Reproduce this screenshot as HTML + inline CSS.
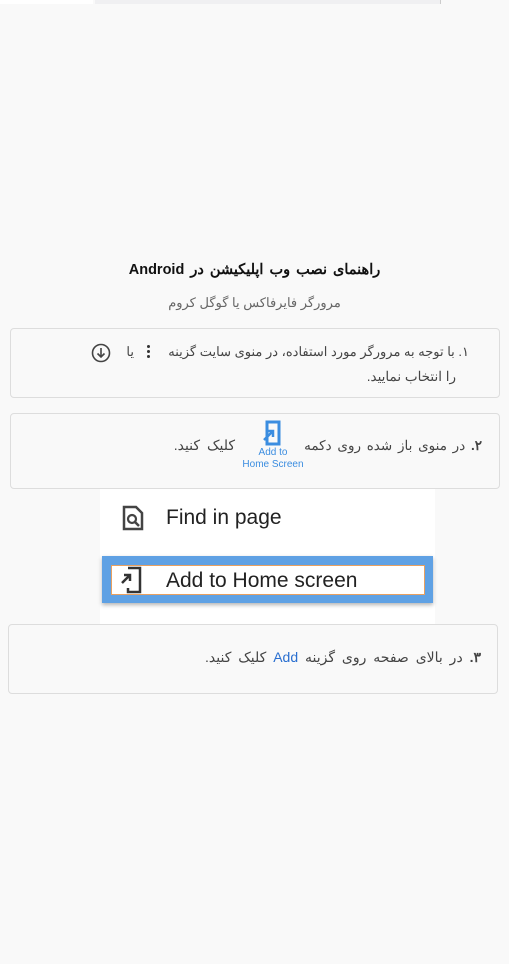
<!DOCTYPE html>
<html><head><meta charset="utf-8"><style>
body{margin:0;width:509px;height:964px;background:#f9f9f9;position:relative;overflow:hidden;font-family:"Liberation Sans","Noto Sans CJK SC",sans-serif;color:#333}
.abs{position:absolute}
.card{position:absolute;border:1px solid #ddd;border-radius:4px;background:#f9f9f9}
.fa{direction:rtl;font-size:13px;color:#444;white-space:nowrap}
</style></head><body>
<div class="abs" style="left:0;top:0;width:93px;height:4px;background:#fff"></div>
<div class="abs" style="left:95px;top:0;width:345px;height:4px;background:#f0f0f2;border-right:1px solid #ccc"></div>

<div class="abs" style="left:0;width:509px;top:262px;text-align:center;font-weight:bold;font-size:14.5px;word-spacing:2px;color:#111;direction:rtl">راهنمای نصب وب اپلیکیشن در Android</div>
<div class="abs" style="left:0;width:509px;top:295px;text-align:center;font-size:13px;color:#666;direction:rtl">مرورگر فایرفاکس یا گوگل کروم</div>

<div class="card" style="left:10px;top:328px;width:488px;height:68px"></div>
<div class="abs fa" style="right:40px;top:344px">۱. با توجه به مرورگر مورد استفاده، در منوی سایت گزینه</div>
<div class="abs fa" style="right:375px;top:344px">یا</div>
<div class="abs" style="left:147px;top:345px;width:3px">
 <div style="width:3px;height:3px;background:#333;border-radius:50%;margin-bottom:2px"></div>
 <div style="width:3px;height:3px;background:#333;border-radius:50%;margin-bottom:2px"></div>
 <div style="width:3px;height:3px;background:#333;border-radius:50%"></div></div>
<svg class="abs" style="left:91px;top:343px" width="20" height="20" viewBox="0 0 20 20"><circle cx="10" cy="10" r="8.5" fill="none" stroke="#444" stroke-width="1.6"/><path d="M10 5v9M6.5 10.5L10 14l3.5-3.5" fill="none" stroke="#444" stroke-width="1.6"/></svg>
<div class="abs fa" style="right:53px;top:369px;font-size:13.5px">را انتخاب نمایید.</div>

<div class="card" style="left:10px;top:413px;width:488px;height:74px"></div>
<div class="abs fa" style="right:27px;top:438px;font-size:13.5px;word-spacing:2px"><b>۲.</b> در منوی باز شده روی دکمه</div>
<div class="abs fa" style="right:274px;top:437px;font-size:14px;word-spacing:3px">کلیک کنید.</div>
<svg class="abs" style="left:262px;top:420px" width="22" height="26" viewBox="0 0 22 26"><rect x="5" y="2" width="12" height="22" fill="none" stroke="#3b8de0" stroke-width="3"/><path d="M2 20L11 11M5 11h6v6" fill="none" stroke="#3b8de0" stroke-width="2.5"/></svg>
<div class="abs" style="left:235px;top:447px;width:76px;text-align:center;font-size:10px;color:#3b8de0;line-height:12px">Add to<br>Home Screen</div>

<div class="abs" style="left:100px;top:489px;width:335px;height:137px;background:#fff"></div>
<svg class="abs" style="left:122px;top:505px" width="24" height="26" viewBox="0 0 24 26"><path d="M2 2h12l6 6v16H2z" fill="none" stroke="#444" stroke-width="2.5"/><circle cx="10" cy="14" r="4" fill="none" stroke="#444" stroke-width="2.2"/><path d="M13 17l4 4" stroke="#444" stroke-width="2.5"/></svg>
<div class="abs" style="left:166px;top:506px;font-size:21px;color:#222">Find in page</div>
<div class="abs" style="left:102px;top:556px;width:331px;height:47px;background:#5fa1e4;box-shadow:0 2px 4px rgba(0,0,0,.3)"></div>
<div class="abs" style="left:111px;top:565px;width:312px;height:28px;background:#fff;border:1px solid #e8a060"></div>
<svg class="abs" style="left:119px;top:566px" width="26" height="28" viewBox="0 0 26 28"><path d="M9 2h12v24H9v-4" fill="none" stroke="#333" stroke-width="2.5"/><path d="M3 17l8-8M5 9h6v6" fill="none" stroke="#333" stroke-width="2.5"/></svg>
<div class="abs" style="left:166px;top:569px;font-size:21px;color:#222">Add to Home screen</div>

<div class="card" style="left:8px;top:624px;width:488px;height:68px"></div>
<div class="abs fa" style="right:28px;top:649px;font-size:14px;word-spacing:3px"><b>۳.</b> در بالای صفحه روی گزینه <span style="color:#2a6fd0">Add</span> کلیک کنید.</div>
</body></html>
